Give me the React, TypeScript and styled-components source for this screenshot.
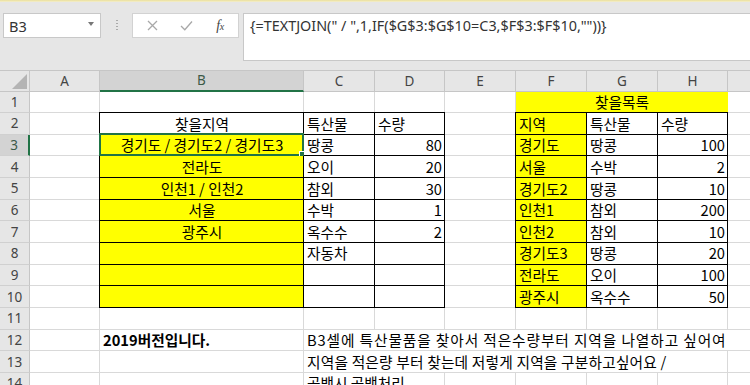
import React from 'react';
import styled, { createGlobalStyle, css } from 'styled-components';

const Global = createGlobalStyle`
  html, body { margin: 0; padding: 0; background: #fff; }
  body { width: 750px; height: 385px; overflow: hidden; }
  #root { width: 750px; height: 385px; overflow: hidden; }
`;

const YELLOW = '#ffff00';
const GRID = '#d9d9d9';
const GREEN = '#217346';
const UI_FONT = `"Noto Sans", "Open Sans", sans-serif`;
const CELL_FONT = `"Noto Sans CJK KR", "Noto Sans", sans-serif`;

const Frame = styled.div`
  width: 750px;
  height: 385px;
  display: flex;
  flex-direction: column;
  overflow: hidden;
`;

const TopLine = styled.div`
  height: 2px;
  flex: none;
  background: linear-gradient(#eadf9a, #f4efcf);
`;

const FormulaBar = styled.div`
  flex: none;
  height: 68px;
  background: #e6e6e6;
  display: flex;
  align-items: flex-start;
  padding: 11px 0 0 3px;
  box-sizing: border-box;
`;

const NameBox = styled.div`
  width: 98px;
  height: 25px;
  box-sizing: border-box;
  background: #fff;
  border: 1px solid #c8c8c8;
  display: flex;
  align-items: center;
  justify-content: space-between;
  padding: 0 6px 0 5px;
  font-family: ${UI_FONT};
  font-size: 14.5px;
  color: #333;
`;

const Caret = styled.span`
  width: 0;
  height: 0;
  border-left: 3.5px solid transparent;
  border-right: 3.5px solid transparent;
  border-top: 4px solid #777;
  margin-top: -3px;
`;

const Grip = styled.div`
  width: 31px;
  height: 25px;
  display: flex;
  justify-content: center;
  align-items: center;
  &::before {
    content: '';
    width: 2px;
    height: 11px;
    background: repeating-linear-gradient(#aaa 0 1px, transparent 1px 3px);
  }
`;

const FnBox = styled.div`
  width: 107px;
  height: 25px;
  box-sizing: border-box;
  background: #fff;
  border: 1px solid #d2d2d2;
  display: flex;
  align-items: center;
  padding-left: 12px;
`;

const FnIcon = styled.span<{ $w: number }>`
  width: ${(p) => p.$w}px;
  display: flex;
  justify-content: center;
  align-items: center;
`;

const Fx = styled.span`
  font-family: "Liberation Serif", serif;
  font-style: italic;
  font-size: 14px;
  color: #444;
  letter-spacing: -0.5px;
  & > small { font-size: 10px; }
`;

const FormulaInput = styled.div`
  flex: 1;
  margin-left: 4px;
  height: 48px;
  box-sizing: border-box;
  background: #fff;
  border: 1px solid #c8c8c8;
  border-right: none;
  padding: 1px 0 0 6px;
  font-family: ${UI_FONT};
  font-size: 14.4px;
  color: #333;
  white-space: nowrap;
  line-height: 22px;
`;

const Sheet = styled.div`
  flex: 1;
  display: grid;
  grid-template-columns: 30px 70px 204px 71px 70px 71px 71px 71px 70px 70px;
  grid-template-rows: 21.5px;
  grid-auto-rows: 21.65px;
  overflow: hidden;
`;

const Corner = styled.div`
  background: #e6e6e6;
  border-right: 1px solid #c6c6c6;
  border-bottom: 1px solid #c6c6c6;
  border-top: 1px solid #c6c6c6;
  box-sizing: border-box;
  display: flex;
  justify-content: flex-end;
  align-items: flex-end;
  padding: 0 2px 2px 0;
`;

const ColHead = styled.div<{ $sel?: boolean }>`
  box-sizing: border-box;
  background: ${(p) => (p.$sel ? '#d3d3d3' : '#e6e6e6')};
  border-top: 1px solid #c6c6c6;
  border-right: 1px solid #c6c6c6;
  border-bottom: ${(p) => (p.$sel ? `2px solid ${GREEN}` : '1px solid #c6c6c6')};
  display: flex;
  align-items: center;
  justify-content: center;
  font-family: ${UI_FONT};
  font-size: 13.5px;
  color: ${(p) => (p.$sel ? '#3c5a48' : '#444')};
`;

const RowHead = styled.div<{ $sel?: boolean }>`
  box-sizing: border-box;
  background: ${(p) => (p.$sel ? '#d3d3d3' : '#e6e6e6')};
  border-right: ${(p) => (p.$sel ? `2px solid ${GREEN}` : '1px solid #c6c6c6')};
  border-bottom: 1px solid #d0d0d0;
  display: flex;
  align-items: center;
  justify-content: center;
  font-family: ${UI_FONT};
  font-size: 13.5px;
  color: ${(p) => (p.$sel ? '#3c5a48' : '#444')};
`;

type Align = 'l' | 'c' | 'r';

const Cell = styled.div<{
  $bg?: string;
  $align?: Align;
  $box?: boolean;
  $edgeL?: boolean;
  $edgeT?: boolean;
  $bold?: boolean;
  $span?: number;
  $rightColor?: string;
  $track?: number;
}>`
  position: relative;
  box-sizing: border-box;
  background: ${(p) => p.$bg || '#fff'};
  border-right: 1px solid ${(p) => p.$rightColor || (p.$box ? '#000' : GRID)};
  border-bottom: 1px solid ${(p) => (p.$box ? '#000' : GRID)};
  ${(p) =>
    (p.$edgeL || p.$edgeT) &&
    css`
      box-shadow: ${[p.$edgeL ? '-1px 0 0 #000' : '', p.$edgeT ? '0 -1px 0 #000' : '', p.$edgeL && p.$edgeT ? '-1px -1px 0 #000' : '']
        .filter(Boolean)
        .join(', ')};
    `}
  grid-column: ${(p) => (p.$span ? `span ${p.$span}` : 'auto')};
  display: flex;
  align-items: center;
  justify-content: ${(p) => (p.$align === 'c' ? 'center' : p.$align === 'r' ? 'flex-end' : 'flex-start')};
  padding: 1px 2px 0 3px;
  font-family: ${CELL_FONT};
  font-size: 14.7px;
  font-weight: ${(p) => (p.$bold ? 700 : 400)};
  letter-spacing: ${(p) => p.$track || 0}px;
  color: #000;
  white-space: nowrap;
  overflow: visible;
  line-height: 1;
`;

const Selection = styled.div`
  position: absolute;
  left: -1px;
  top: -2px;
  right: -1px;
  bottom: -1px;
  border: 2px solid ${GREEN};
  pointer-events: none;
  &::after {
    content: '';
    position: absolute;
    right: -4px;
    bottom: -4px;
    width: 5px;
    height: 5px;
    background: ${GREEN};
    border: 1px solid #fff;
  }
`;

type CellDef = {
  text?: string;
  bg?: string;
  align?: Align;
  box?: boolean;
  edgeL?: boolean;
  edgeT?: boolean;
  bold?: boolean;
  span?: number;
  sel?: boolean;
  rightColor?: string;
  track?: number;
};

const regionsB = ['경기도 / 경기도2 / 경기도3', '전라도', '인천1 / 인천2', '서울', '광주시', '', '', ''];
const itemsC = ['땅콩', '오이', '참외', '수박', '옥수수', '자동차', '', ''];
const qtyD = ['80', '20', '30', '1', '2', '', '', ''];
const listF = ['경기도', '서울', '경기도2', '인천1', '인천2', '경기도3', '전라도', '광주시'];
const listG = ['땅콩', '수박', '땅콩', '참외', '참외', '땅콩', '오이', '옥수수'];
const listH = ['100', '2', '10', '200', '10', '20', '100', '50'];

const buildRows = (): CellDef[][] => {
  const rows: CellDef[][] = [];
  rows.push([{}, {}, {}, {}, {}, { text: '찾을목록', bg: YELLOW, align: 'c', span: 3, rightColor: YELLOW }, {}]);
  rows.push([
    {},
    { text: '찾을지역', align: 'c', box: true, edgeL: true, edgeT: true },
    { text: '특산물', box: true, edgeT: true },
    { text: '수량', box: true, edgeT: true },
    {},
    { text: '지역', bg: YELLOW, box: true, edgeL: true, edgeT: true },
    { text: '특산물', box: true, edgeT: true },
    { text: '수량', box: true, edgeT: true },
    {},
  ]);
  for (let i = 0; i < 8; i++) {
    rows.push([
      {},
      { text: regionsB[i], bg: YELLOW, align: 'c', box: true, edgeL: true, sel: i === 0 },
      { text: itemsC[i], box: true },
      { text: qtyD[i], align: 'r', box: true },
      {},
      { text: listF[i], bg: YELLOW, box: true, edgeL: true },
      { text: listG[i], box: true },
      { text: listH[i], align: 'r', box: true },
      {},
    ]);
  }
  rows.push([{}, {}, {}, {}, {}, {}, {}, {}, {}]);
  rows.push([
    {},
    { text: '2019버전입니다.', bold: true },
    { text: 'B3셀에 특산물품을 찾아서 적은수량부터 지역을 나열하고 싶어여', span: 7, track: 0.9 },
  ]);
  rows.push([{}, {}, { text: '지역을 적은량 부터 찾는데 저렇게 지역을 구분하고싶어요 /', span: 6, track: 0.2 }, {}]);
  rows.push([{}, {}, { text: '공백시 공백처리', span: 2 }, {}, {}, {}, {}, {}]);
  return rows;
};

const COLS = ['A', 'B', 'C', 'D', 'E', 'F', 'G', 'H', 'I'];

export default function App() {
  const rows = buildRows();
  return (
    <Frame>
      <Global />
      <TopLine />
      <FormulaBar>
        <NameBox>
          <span>B3</span>
          <Caret />
        </NameBox>
        <Grip />
        <FnBox>
          <FnIcon $w={14}>
            <svg width="11" height="11" viewBox="0 0 11 11">
              <path d="M1 1 L10 10 M10 1 L1 10" stroke="#a8a8a8" strokeWidth="1.3" fill="none" />
            </svg>
          </FnIcon>
          <FnIcon $w={54}>
            <svg width="13" height="11" viewBox="0 0 13 11">
              <path d="M1 6 L4.8 9.8 L12 1.5" stroke="#a8a8a8" strokeWidth="1.3" fill="none" />
            </svg>
          </FnIcon>
          <FnIcon $w={14}>
            <Fx>
              f<small>x</small>
            </Fx>
          </FnIcon>
        </FnBox>
        <FormulaInput>{'{=TEXTJOIN(" / ",1,IF($G$3:$G$10=C3,$F$3:$F$10,""))}'}</FormulaInput>
      </FormulaBar>
      <Sheet>
        <Corner>
          <svg width="15" height="15" viewBox="0 0 15 15">
            <path d="M15 0 L15 15 L0 15 Z" fill="#b4b4b4" />
          </svg>
        </Corner>
        {COLS.map((c) => (
          <ColHead key={c} $sel={c === 'B'}>
            {c}
          </ColHead>
        ))}
        {rows.map((cells, ri) => (
          <React.Fragment key={ri}>
            <RowHead $sel={ri === 2}>{ri + 1}</RowHead>
            {cells.map((d, ci) => (
              <Cell
                key={ci}
                $bg={d.bg}
                $align={d.align}
                $box={d.box}
                $edgeL={d.edgeL}
                $edgeT={d.edgeT}
                $bold={d.bold}
                $span={d.span}
                $rightColor={d.rightColor}
                $track={d.track}
              >
                {d.text}
                {d.sel && <Selection />}
              </Cell>
            ))}
          </React.Fragment>
        ))}
      </Sheet>
    </Frame>
  );
}
